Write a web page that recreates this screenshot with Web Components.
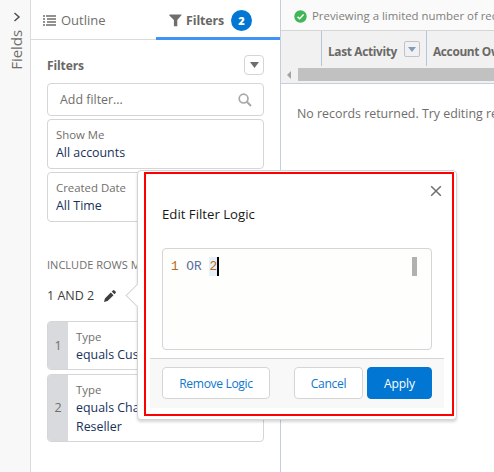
<!DOCTYPE html>
<html lang="en">
<head>
<meta charset="utf-8">
<title>Report filters</title>
<style>
html,body{margin:0;height:100%;overflow:hidden}
body{font:12.3px/18px "Open Sans","Noto Sans",sans-serif;color:#706e6b;background:#fff}
</style>
</head>
<body>
<report-builder></report-builder>
<script>
const define = (name, html) => {
  const t = document.createElement('template');
  t.innerHTML = '<style>*{box-sizing:border-box}:host{box-sizing:border-box}svg{display:block;flex:none}</style>' + html;
  customElements.define(name, class extends HTMLElement {
    constructor() {
      super();
      this.attachShadow({mode: 'open'}).append(t.content.cloneNode(true));
    }
  });
};

define('fields-rail', `
<style>
:host{display:flex;flex-direction:column;align-items:center;width:31px;background:#f8f8f8;border-right:1px solid #dddbda;padding-top:12px}
svg{margin-left:3px}
span{writing-mode:vertical-rl;transform:rotate(180deg);font-size:15px;line-height:20px;margin-top:8px;margin-left:1px;white-space:nowrap;letter-spacing:-.05px}
</style>
<svg width="8" height="10" viewBox="0 0 8 10"><path d="M1.5 1L6 5L1.5 9" fill="none" stroke="#514f4d" stroke-width="1.5"/></svg>
<span>Fields</span>`);

define('panel-tabs', `
<style>
:host{display:grid;grid-template-columns:125px 124px;height:40px;border-bottom:1px solid #dddbda}
div{display:flex;align-items:center;height:40px}
.o{padding-left:12px;gap:5px;font-size:13px}
.f{padding:3px 0 0 13px;border-bottom:3px solid #4094f7;font-weight:700;font-size:12.4px;color:#696765}
.f span{margin:1px 6px 0 4px;width:39px;letter-spacing:-.1px}
b{width:21px;height:21px;border-radius:50%;background:#0176d3;color:#fff;font-size:11px;line-height:21px;text-align:center}
</style>
<div class="o"><svg width="13" height="11" viewBox="0 0 13 11"><path d="M0 1h2M3 1h10M0 4h2M4 4h9M0 7h2M4 7h9M0 10h2M3 10h10" stroke="#706e6b" stroke-width="1.3"/></svg><span>Outline</span></div>
<div class="f"><svg width="13" height="13" viewBox="0 0 13 13"><path d="M.2 1Q.2.4.8.4H12.2Q13 .4 12.6 1.1L8.3 6V12.2H4.9V6L.4 1.5Z" fill="#706e6b"/></svg><span>Filters</span><b>2</b></div>`);

define('filter-card', `
<style>
:host{display:flex;border:1px solid #d5d5d5;border-radius:4px;background:#fff;overflow:hidden;height:50px}
.n{display:flex;align-items:center;justify-content:center;width:20px;background:#d8dadd;color:#706e6b;font-size:12.5px}
:host(:not([numbered])) .n{display:none}
.c{padding:6px 8px 0;white-space:nowrap}
.l{font-size:11.4px;line-height:18px}
.v{color:#16325c;font-size:12.4px;line-height:19px;margin-top:-1px}
</style>
<div class="n"><slot name="number"></slot></div>
<div class="c"><div class="l"><slot name="label"></slot></div><div class="v"><slot></slot></div></div>`);

define('filter-search', `
<style>
:host{display:flex;align-items:center;justify-content:space-between;height:33px;border:1px solid #d5d5d5;border-radius:4px;padding:0 11px 0 12px;font-size:12.4px}
</style>
<span>Add filter...</span>
<svg width="14" height="14" viewBox="0 0 14 14"><circle cx="5.6" cy="5.6" r="4.4" fill="none" stroke="#a9a8a6" stroke-width="1.7"/><path d="M8.8 8.8L13 13" stroke="#a9a8a6" stroke-width="2"/></svg>`);

define('filters-panel', `
<style>
:host{display:flex;flex-direction:column;width:250px;background:#fff;border-right:1px solid #c3cfe0}
.h{display:flex;justify-content:space-between;align-items:center;height:20px;margin-bottom:8px;font-weight:700;font-size:12px;color:#696765}
.h span{letter-spacing:-.1px;padding-top:1px}
.m{width:20px;height:20px;border:1px solid #d5d5d5;border-radius:4px;display:flex;align-items:center;justify-content:center}
.b{display:flex;flex-direction:column;padding:15px 16px 0;width:249px}
filter-card{margin-top:3px}
.i{font-size:11px;white-space:nowrap;margin-top:34px;letter-spacing:.02px}
.x{display:flex;align-items:center;gap:10px;color:#3e3e3c;font-size:12.5px;margin:13px 0 13px}
.one{height:49px}
.two{height:68px;margin-top:4px}
</style>
<panel-tabs></panel-tabs>
<div class="b">
<div class="h"><span>Filters</span><div class="m"><svg width="9" height="6" viewBox="0 0 9 6"><path d="M0 0H9L4.5 6Z" fill="#706e6b"/></svg></div></div>
<filter-search></filter-search>
<filter-card><span slot="label">Show Me</span>All accounts</filter-card>
<filter-card><span slot="label">Created Date</span>All Time</filter-card>
<div class="i">INCLUDE ROWS MATCHING</div>
<div class="x"><span>1 AND 2</span><svg width="12" height="12" viewBox="0 0 12 12"><path d="M0 12L.9 8.4L6.8 2.5L9.5 5.2L3.6 11.1ZM7.7 1.6L9 .4Q9.7-.2 10.4.4L11.6 1.6Q12.2 2.3 11.6 3L10.4 4.3Z" fill="#3e3e3c"/></svg></div>
<filter-card numbered class="one"><span slot="number">1</span><span slot="label">Type</span>equals Customer</filter-card>
<filter-card numbered class="two"><span slot="number">2</span><span slot="label">Type</span>equals Channel Partner /<br>Reseller</filter-card>
</div>`);

define('column-header', `
<style>
:host{display:flex;align-items:flex-start;gap:7px;height:35px;border-left:1px solid #b6c6da;padding:9px 0 0 6px;font-weight:700;font-size:11.9px;letter-spacing:-.35px;color:#6b6967;white-space:nowrap}
i{width:16px;height:16px;border:1px solid #bfc3c9;border-radius:2px;display:flex;align-items:center;justify-content:center;margin-top:1px}
:host([plain]) i{display:none}
span{padding-top:2px}
</style>
<span><slot></slot></span><i><svg width="8" height="5" viewBox="0 0 8 5"><path d="M0 0H8L4 5Z" fill="#7f9cc0"/></svg></i>`);

define('preview-pane', `
<style>
:host{display:flex;flex-direction:column;flex:1;min-width:0;overflow:hidden;white-space:nowrap}
.p{display:flex;align-items:center;gap:5px;height:31px;border-bottom:1px solid #d5d5d5;padding:2px 0 0 13px;background:#fafafa;font-size:11.4px;color:#807e7b}
.t{height:53px;background:#f1f1f1;border-bottom:1px solid #c5cfe0}
.c{display:grid;grid-template-columns:40px 105px 120px;height:37px}
.s{display:flex;align-items:center;height:13px}
.s svg{margin:0 7px 0 6px}
.s div{flex:1;height:13px;background:#c1c1c1}
.e{padding:21px 0 0 16px;font-size:12.4px}
</style>
<div class="p"><svg width="13" height="13" viewBox="0 0 13 13"><circle cx="6.5" cy="6.5" r="6.2" fill="#41b658"/><path d="M3.5 6.7L5.6 8.7L9.6 4.6" fill="none" stroke="#fff" stroke-width="1.5"/></svg><span>Previewing a limited number of records.</span></div>
<div class="t"><div class="c"><span></span><column-header>Last Activity</column-header><column-header plain>Account Owner</column-header></div>
<div class="s"><svg width="4" height="8" viewBox="0 0 4 8"><path d="M4 0V8L0 4Z" fill="#a3a3a3"/></svg><div></div></div></div>
<div class="e">No records returned. Try editing report filters.</div>`);

define('push-button', `
<style>
:host{display:flex;align-items:center;justify-content:center;height:32px;border:1px solid #d5d5d5;border-radius:4px;padding-top:1px;background:#fff;color:#0c78cf;font-size:12.1px;letter-spacing:-.35px;white-space:nowrap}
:host([brand]){background:#0176d3;border-color:#0176d3;color:#fff;letter-spacing:-.1px}
</style><slot></slot>`);

define('logic-popover', `
<style>
:host{position:absolute;left:137px;top:170px;width:320px;height:250px;background:#fff;border:1px solid #d5d5d5;border-radius:4px;box-shadow:0 2px 3px rgba(0,0,0,.16);padding:1px 2px 4px 6px}
.nub{position:absolute;left:-9.5px;top:116px;width:17px;height:17px;transform:rotate(45deg);background:#fff;border-left:1px solid #d5d5d5;border-bottom:1px solid #d5d5d5}
.r{position:relative;display:flex;flex-direction:column;width:310px;height:244px;border:2px solid #fe0000;background:#fff;padding:11px 8px 6px 4px}
.x{align-self:flex-end;margin-right:2px}
h2{margin:8px 0 25px 12px;font-weight:400;font-size:13.2px;line-height:18px;color:#181818}
.a{flex:none;display:flex;justify-content:space-between;align-items:flex-start;margin-left:12px;width:270px;height:102px;border:1px solid #d5d5d5;border-radius:4px;background:#fefefc;padding:8px 14px 0 8px;font:12.8px/19px "Liberation Mono",monospace;color:#b9691b;white-space:pre}
.a span{color:#5a6f9e}
.a b{font-weight:400;display:inline-block;height:19px;background:#e5f0fb;border-right:2px solid #000}
.a i{width:5px;height:19px;background:#b1b1b1}
.f{display:flex;flex:none;align-items:flex-start;width:294px;height:50px;margin-top:8px;padding:8px 12px 0;border-top:1px solid #d5d5d5;background:#f8f8f8}
.f :nth-child(1){width:108px}.f :nth-child(2){width:69px;margin-left:auto;margin-right:4px}.f :nth-child(3){width:65px}
</style>
<div class="nub"></div>
<div class="r">
<svg class="x" width="12" height="12" viewBox="0 0 12 12"><path d="M1.2 1.2L10.8 10.8M10.8 1.2L1.2 10.8" stroke="#706e6b" stroke-width="1.5"/></svg>
<h2>Edit Filter Logic</h2>
<div class="a"><div>1 <span>OR</span> <b>2</b></div><i></i></div>
<div class="f"><push-button>Remove Logic</push-button><push-button>Cancel</push-button><push-button brand>Apply</push-button></div>
</div>`);

define('report-builder', `
<style>:host{display:flex;position:relative;width:494px;height:472px;overflow:hidden}</style>
<fields-rail></fields-rail><filters-panel></filters-panel><preview-pane></preview-pane><logic-popover></logic-popover>`);
</script>
</body>
</html>
